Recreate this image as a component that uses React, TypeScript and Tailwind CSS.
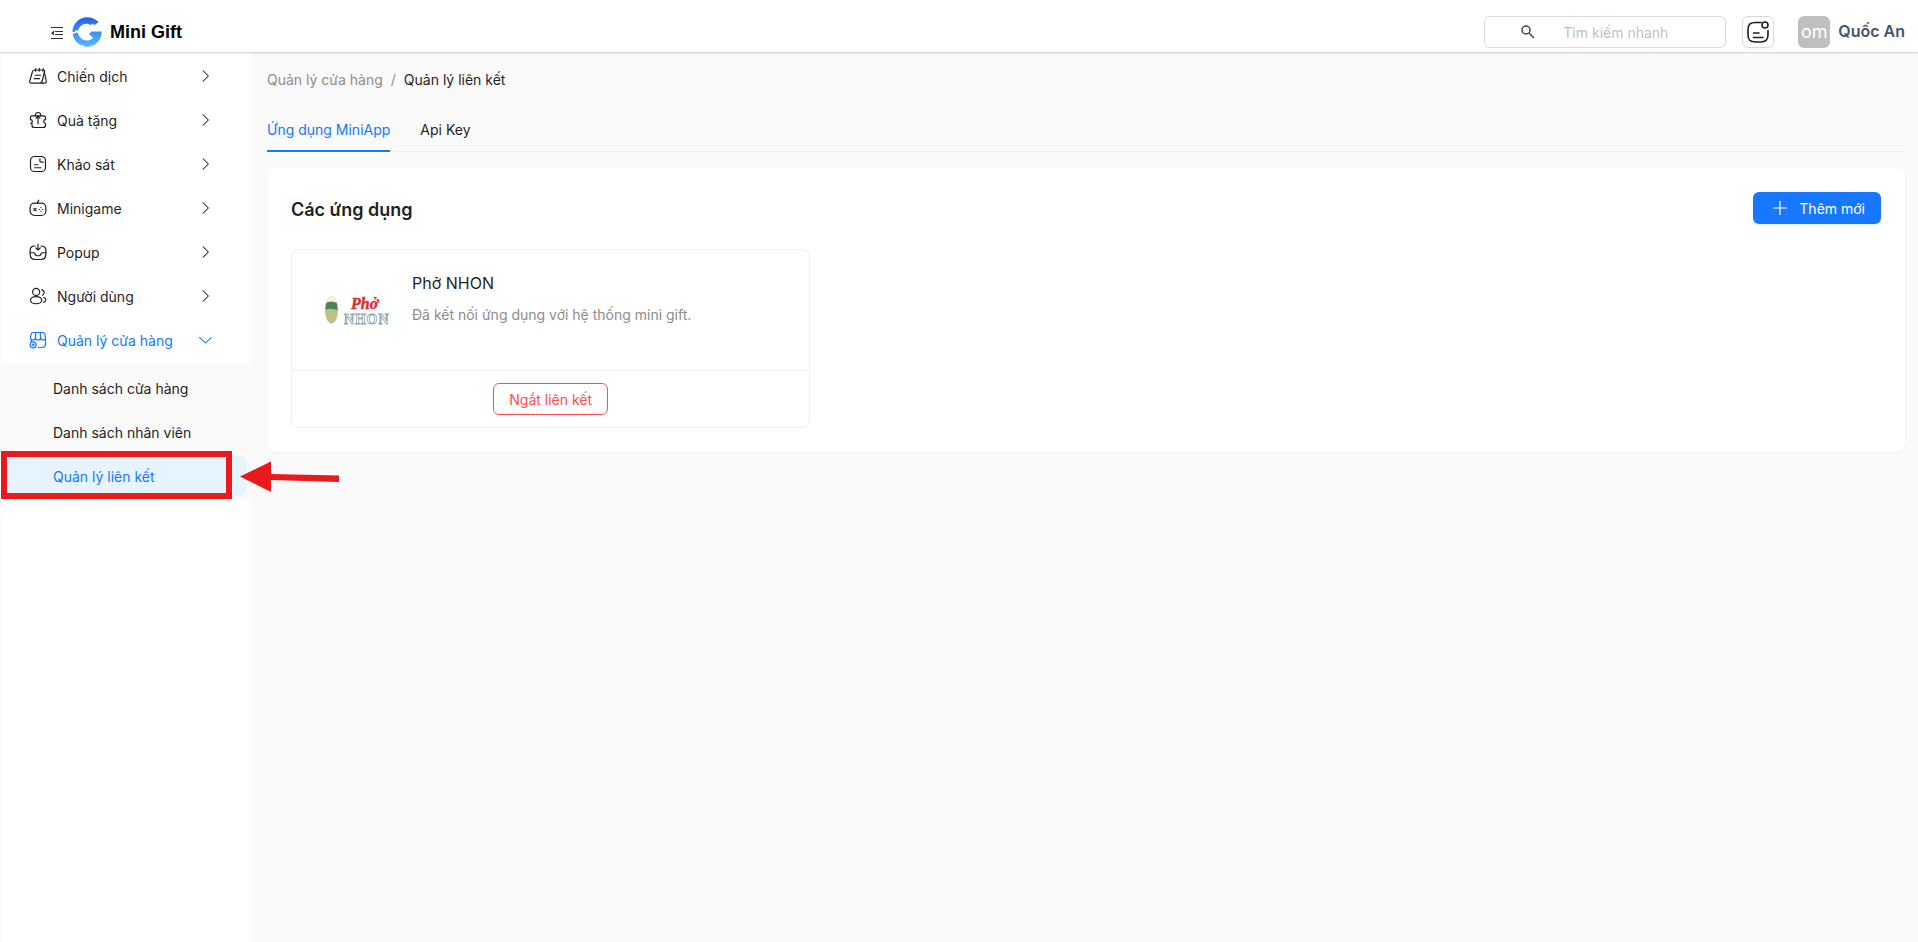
import React from "react";

type IconProps = { className?: string };

function Glyph({ children, className = "size-[18px]" }: { children: React.ReactNode; className?: string }) {
  return (
    <svg viewBox="0 0 24 24" fill="none" stroke="currentColor" strokeWidth="1.6" strokeLinecap="round" strokeLinejoin="round" className={className} aria-hidden="true">
      {children}
    </svg>
  );
}

const CampaignIcon = () => (
  <Glyph>
    <path d="M8 4h11c1.500 0 2 .8 1.700 2.200L17.500 19c-.4 1.600-1.500 2.500-3 2.500H3c-1.700 0-2.500-1-2-2.700L4.500 6.500C5 5 6 4 8 4z" />
    <path d="M9 2 8.500 5.500M14 2l-.5 3.500M19 2l-.5 3.500M8.500 11h7M7 15.500h7M20.500 7l2.500 12c.3 1.500-.5 2.500-2 2.500h-5" />
  </Glyph>
);
const GiftIcon = () => (
  <Glyph>
    <path d="M4.500 6.500h15c1.500 0 2.500 1 2.500 2.500V11.500a2.300 2.300 0 0 0 0 4.800V19c0 2-1 3-3 3H7c-2 0-3-1-3-3v-2.700H2a2.300 2.300 0 0 0 0-4.800V9C2 7.500 3 6.500 4.500 6.500z" />
    <path d="M8.500 6.500C7.500 3.500 10 2 12 2s4.500 1.500 3.500 4.500M12 6.500V17M9.500 9.500 12 6.500l2.500 3" />
  </Glyph>
);
const SurveyIcon = () => (
  <Glyph>
    <rect x="2" y="2" width="20" height="20" rx="5.500" />
    <path d="M14.500 5v2.500c0 1 .8 2 2 2H19M7.500 13H12M7.500 17H16" />
  </Glyph>
);
const MinigameIcon = () => (
  <Glyph>
    <rect x="1.500" y="5.500" width="21" height="16.500" rx="6" />
    <path d="M11.500 5.500V4c0-1 1.500-1 1.500-2.500M6.500 12.500l3 3M9.500 12.500l-3 3M16 11.500v.1M16 16.200v.1M13.700 14h.1M18.300 14h.1" />
  </Glyph>
);
const PopupIcon = () => (
  <Glyph>
    <path d="M12 1.500V9M9 6.500 12 9.500l3-3M8 4C3.500 4 1.500 5.500 1.500 10v5c0 5 2 7 7 7h7c5 0 7-2 7-7v-5c0-4.500-2-6-6.500-6" />
    <path d="M1.500 13H6c1 0 1.500.5 2 1.500l.5 1c.5 1 1 1.500 2 1.500h3c1 0 1.500-.5 2-1.500l.5-1c.5-1 1-1.500 2-1.500h4.500" />
  </Glyph>
);
const UsersIcon = () => (
  <Glyph>
    <circle cx="9.500" cy="6.500" r="4.700" />
    <ellipse cx="9.500" cy="17.500" rx="7.500" ry="4.800" />
    <path d="M17 3.500a4 4 0 0 1 1 7.500M19.500 14c3.500.5 4 5 0 6.500" />
  </Glyph>
);
const StoreIcon = () => (
  <Glyph>
    <path d="M5 2h14c1.500 0 2.500 3 3 6.500.3 2-1 3.500-3.200 3.500S15.500 10.500 15.500 9c0 2-1.300 3-3.500 3S8.500 11 8.500 9c0 1.500-1.100 3-3.300 3S1.800 10.500 2 8.500C2.500 5 3.500 2 5 2zM9 2 8.500 9M15 2l.5 7M3 12v2M22 11v6c0 3-1.500 5-5 5h-5" />
    <circle cx="5.500" cy="18.500" r="4" />
    <path d="M5.500 17v3M4 18.500h3" />
  </Glyph>
);
const ChevronRight = ({ className = "" }: IconProps) => (
  <Glyph className={className}><path strokeWidth="1.800" d="m7 3 9 9-9 9" /></Glyph>
);
const ChevronDown = ({ className = "" }: IconProps) => (
  <Glyph className={className}><path strokeWidth="1.800" d="m1 8 10 9 10-9" /></Glyph>
);
const FoldIcon = () => (
  <svg viewBox="0 0 14 12" className="h-3 w-3.5" fill="none" stroke="#333" aria-hidden="true">
    <path d="M1 .5h12M5 4.500h8M5 7.500h8M1 11.500h12" />
    <path d="m1 6 3-2.500v5z" fill="#333" stroke="none" />
  </svg>
);
const BrandLogo = () => (
  <svg viewBox="0 0 30 30" className="size-[30px]" aria-hidden="true">
    <defs>
      <linearGradient id="brand" gradientUnits="userSpaceOnUse" x1="0" y1="0" x2="0" y2="30">
        <stop offset="0" stopColor="#2361ea" />
        <stop offset="1" stopColor="#58bbfd" />
      </linearGradient>
    </defs>
    <path fill="url(#brand)" d="M.5 15C.5 7 7 .2 15 .2c4.600 0 8.500 1.800 11.600 5L22.500 8l-1.800-1.500-1.900 1.800C17.500 7 16.300 6.800 15 6.800c-4.500 0-8 2.800-9 7.200l-1.700-1L2.500 15z" />
    <path fill="url(#brand)" d="M.7 16.800 3 16.500l1.600-1.200 1.700 1.500c.9 4 4.200 6.600 8.700 6.600 2.500 0 4.500-.8 6-2.400L17 17l2.500-2.500H29.700C30 23 23.200 29.800 15 29.800c-1 0-2-.1-3-.4l-.6-1.500-2 .6C4.600 26.300 1.400 22 .7 16.800z" />
  </svg>
);
const RestaurantLogo = () => (
  <svg viewBox="0 0 66 32" className="h-8 w-[66px]" role="img" aria-label="Phở NHON">
    <clipPath id="bowl"><ellipse cx="7.500" cy="16" rx="6.500" ry="13.500" /></clipPath>
    <g clipPath="url(#bowl)">
      <rect width="15" height="32" fill="#fbf6e4" />
      <path d="M0 10q7-5 15 0v7H0z" fill="#4f8058" />
      <path d="M0 16q8-3 15 1v15H0z" fill="#a9c59b" />
      <path d="M0 20q7-4 14 1M1 26q6-4 13 0" stroke="#d5bb69" strokeWidth="2" fill="none" />
    </g>
    <ellipse cx="7.500" cy="16" rx="6.500" ry="13.500" fill="none" stroke="#e5d5a8" strokeWidth=".7" />
    <text x="27" y="15" fontFamily="Liberation Serif, serif" fontStyle="italic" fontWeight="700" fontSize="16" fill="#df2a33" stroke="#df2a33" strokeWidth=".4">Phở</text>
    <g fontFamily="Liberation Serif, serif" fontWeight="700" fontSize="14" fill="#fff" stroke="#8aa5a5" strokeWidth=".8" textAnchor="middle">
      <text x="25" y="30">N</text>
      <text x="36.500" y="30">H</text>
      <text x="48" y="30">O</text>
      <text x="59.500" y="30">N</text>
    </g>
  </svg>
);

const menu = [
  { label: "Chiến dịch", Icon: CampaignIcon },
  { label: "Quà tặng", Icon: GiftIcon },
  { label: "Khảo sát", Icon: SurveyIcon },
  { label: "Minigame", Icon: MinigameIcon },
  { label: "Popup", Icon: PopupIcon },
  { label: "Người dùng", Icon: UsersIcon },
];

function Header() {
  return (
    <header className="relative z-10 flex h-[52px] shrink-0 items-center justify-between bg-white pr-[13px] pl-[50px] shadow-[0_1px_2px_rgba(0,0,0,0.2)]">
      <div className="flex items-center gap-2 pt-3">
        <button type="button" aria-label="Thu gọn menu" className="pt-0.5"><FoldIcon /></button>
        <a href="#" className="flex items-center gap-2 font-['Liberation_Sans',sans-serif] text-lg font-bold text-black">
          <BrandLogo />
          Mini Gift
        </a>
      </div>
      <div className="flex items-center pt-3">
        <label className="flex h-8 w-[242px] items-center rounded-md border border-[#d9d9d9] pl-9">
          <svg viewBox="0 0 14 14" className="size-3.5 shrink-0" fill="none" stroke="#444" strokeWidth="1.500" aria-hidden="true">
            <circle cx="5" cy="5" r="4" /><path d="m8 8 5 5" />
          </svg>
          <input type="search" aria-label="Tìm kiếm nhanh" placeholder="Tìm kiếm nhanh" className="ml-7 w-full min-w-0 bg-transparent pt-0.5 outline-none placeholder:text-[#bfbfbf]" />
        </label>
        <button type="button" aria-label="Thông báo" className="ml-4 flex size-8 items-center justify-center rounded-md border border-[#d9d9d9] shadow-[0_2px_0_rgba(0,0,0,0.02)]">
          <Glyph className="size-6 shrink-0">
            <path d="M15 2.500H9.500C4 2.500 2 4.500 2 10v5c0 5 2 7 7.500 7h5c5 0 7.500-2 7.500-7v-4.500M7.500 13H13M7.500 17.500H17" />
            <circle cx="19" cy="5" r="3" />
          </Glyph>
        </button>
        <span className="ml-6 flex size-8 items-center justify-center rounded-md bg-[#bfbfbf] text-lg text-white">om</span>
        <span className="ml-2 pb-0.5 text-base font-semibold text-[#475467]">Quốc An</span>
      </div>
    </header>
  );
}

function Sidebar() {
  return (
    <nav className="ml-px w-[250px] shrink-0 bg-white">
      <ul className="flex flex-col gap-1 p-1">
        {menu.map(({ label, Icon }) => (
          <li key={label}>
            <button type="button" className="flex h-10 w-full items-center gap-2.5 rounded-lg pr-[34px] pl-6 text-left">
              <Icon />
              <span className="grow pt-0.5">{label}</span>
              <ChevronRight className="size-3.5" />
            </button>
          </li>
        ))}
        <li>
          <button type="button" aria-expanded="true" className="flex h-10 w-full items-center gap-2.5 rounded-lg pr-[34px] pl-6 text-left text-[#1677ff]">
            <StoreIcon />
            <span className="grow pt-0.5">Quản lý cửa hàng</span>
            <ChevronDown className="size-3.5" />
          </button>
        </li>
      </ul>
      <ul className="flex flex-col gap-1 bg-[#fafafa] p-1">
        <li><a href="#" className="flex h-10 items-center rounded-lg pt-0.5 pl-12">Danh sách cửa hàng</a></li>
        <li><a href="#" className="flex h-10 items-center rounded-lg pt-0.5 pl-12">Danh sách nhân viên</a></li>
        <li className="relative">
          <a href="#" aria-current="page" className="flex h-10 items-center rounded-lg bg-[#e6f4ff] pt-0.5 pl-12 text-[#1677ff]">Quản lý liên kết</a>
          <span className="absolute -top-[5px] -left-1 h-12 w-[231px] border-6 border-[#e81a1c]" />
          <svg viewBox="0 0 100 32" className="absolute top-1 left-[235px] z-10 h-8 w-[100px]" fill="#e81a1c" aria-hidden="true">
            <path d="M0 16.500 31 1.500V14l68 1.500v6.500L31 20v12z" />
          </svg>
        </li>
      </ul>
    </nav>
  );
}

export default function App() {
  return (
    <div className="flex min-h-screen flex-col bg-[#fafafa] font-['Inter',sans-serif] text-sm text-[#1f1f1f]">
      <Header />
      <div className="flex grow">
        <Sidebar />
        <main className="min-w-0 grow pt-4 pr-[13px] pl-4">
          <nav aria-label="Breadcrumb" className="flex h-6 items-center gap-2 text-[#8c8c8c]">
            <a href="#">Quản lý cửa hàng</a>
            <span>/</span>
            <span className="text-[#1f1f1f]">Quản lý liên kết</span>
          </nav>
          <div role="tablist" className="mt-4 flex h-11 gap-[30px] border-b border-[#f0f0f0]">
            <button type="button" role="tab" aria-selected="true" className="-mb-px border-b-2 border-[#1677ff] pt-0.5 text-[#1677ff]">Ứng dụng MiniApp</button>
            <button type="button" role="tab" aria-selected="false">Api Key</button>
          </div>
          <section className="mt-4 rounded-lg bg-white p-6 shadow-[0_1px_2px_rgba(0,0,0,0.05)]">
            <div className="flex items-center justify-between">
              <h1 className="pt-1 text-lg leading-7 font-semibold">Các ứng dụng</h1>
              <button type="button" className="flex h-8 w-32 items-center justify-end gap-3 rounded-md bg-[#1677ff] pr-4 text-white shadow-[0_2px_0_rgba(5,145,255,0.1)]">
                <svg viewBox="0 0 14 14" className="size-3.5" stroke="currentColor" strokeWidth="1.200" aria-hidden="true"><path d="M7 0v14M0 7h14" /></svg>
                <span className="pt-0.5">Thêm mới</span>
              </button>
            </div>
            <div className="mt-[25px] grid grid-cols-3 gap-4">
              <article className="rounded-lg border border-[#f0f0f0]">
                <div className="flex h-[120px] gap-[22px] pt-5 pl-8">
                  <div className="w-[66px] pt-6"><RestaurantLogo /></div>
                  <div className="pt-px">
                    <h2 className="text-base">Phở NHON</h2>
                    <p className="mt-2.5 text-[#8c8c8c]">Đã kết nối ứng dụng với hệ thống mini gift.</p>
                  </div>
                </div>
                <div className="flex justify-center border-t border-[#f0f0f0] py-3">
                  <button type="button" className="h-8 rounded-md border border-[#ff4d4f] px-[15px] pt-0.5 text-[#ff4d4f]">Ngắt liên kết</button>
                </div>
              </article>
            </div>
          </section>
        </main>
      </div>
    </div>
  );
}
